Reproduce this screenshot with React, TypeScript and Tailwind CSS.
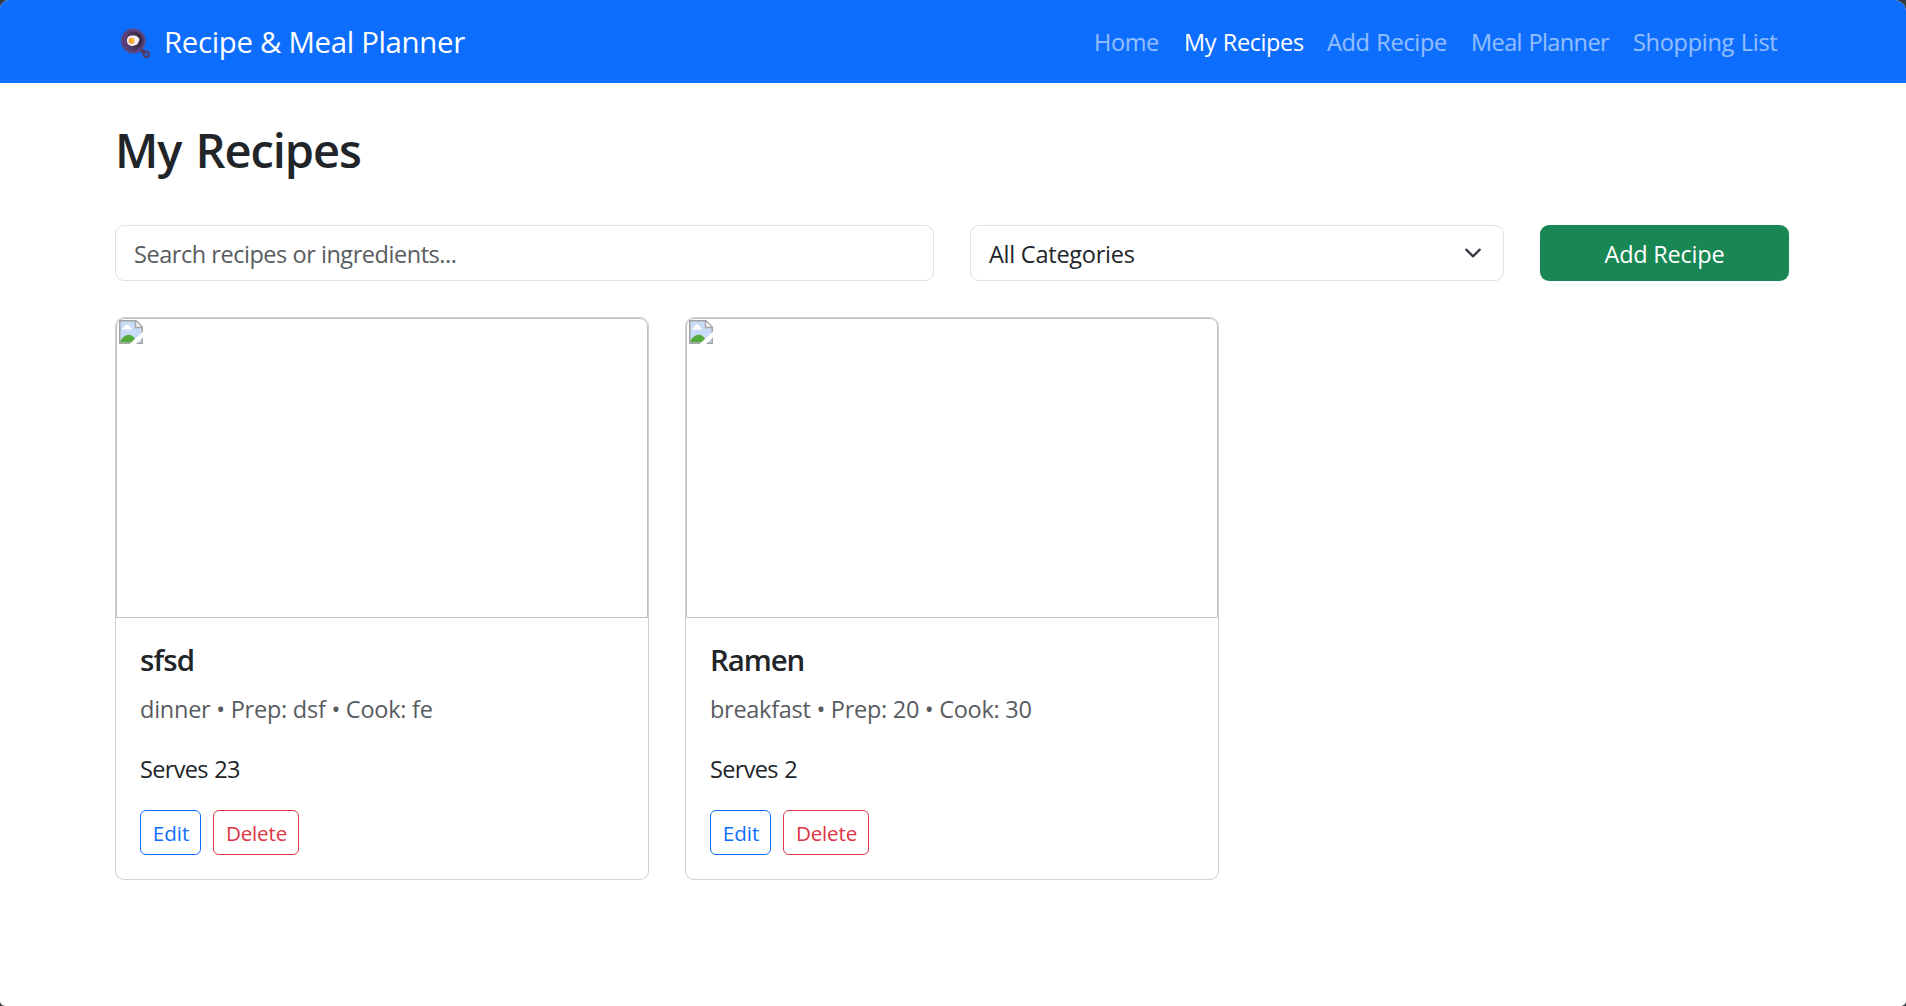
type NavItem = { label: string; active?: boolean; tracking: string };

const NAV_ITEMS: NavItem[] = [
  { label: "Home", tracking: "w-[66px] tracking-[-0.4px]" },
  { label: "My Recipes", active: true, tracking: "w-[119px] tracking-[-0.4px] [word-spacing:1px]" },
  { label: "Add Recipe", tracking: "w-[120px] tracking-[-0.34px] [word-spacing:1px]" },
  { label: "Meal Planner", tracking: "w-[138px] tracking-[-0.6px] [word-spacing:1px]" },
  { label: "Shopping List", tracking: "w-[144px] tracking-[-0.29px] [word-spacing:1px]" },
];

type Recipe = {
  title: string;
  titleTracking: string;
  meta: string;
  metaTracking: string;
  serves: string;
  servesTracking: string;
};

const RECIPES: Recipe[] = [
  {
    title: "sfsd",
    titleTracking: "tracking-[-0.83px]",
    meta: "dinner • Prep: dsf • Cook: fe",
    metaTracking: "tracking-[-0.25px]",
    serves: "Serves 23",
    servesTracking: "tracking-[-0.68px] [word-spacing:1px]",
  },
  {
    title: "Ramen",
    titleTracking: "tracking-[-1.05px]",
    meta: "breakfast • Prep: 20 • Cook: 30",
    metaTracking: "tracking-[-0.28px]",
    serves: "Serves 2",
    servesTracking: "tracking-[-0.65px] [word-spacing:1px]",
  },
];

function PanIcon() {
  return (
    <svg className="mt-0.5 h-[31px] w-[31px] shrink-0" viewBox="0 0 31 31" fill="none">
      <defs>
        <linearGradient id="panInner" x1="5" y1="14" x2="23" y2="12" gradientUnits="userSpaceOnUse">
          <stop stopColor="#5a4276" />
          <stop offset="0.6" stopColor="#40304f" />
          <stop offset="1" stopColor="#33283e" />
        </linearGradient>
        <radialGradient id="yolk" cx="0.65" cy="0.35" r="0.7">
          <stop stopColor="#ffc93c" />
          <stop offset="1" stopColor="#f08c1e" />
        </radialGradient>
      </defs>
      <path d="M21 21.5L25 25.5" stroke="#4d3b66" strokeWidth="4" />
      <circle cx="26.2" cy="26.2" r="2.6" stroke="#523b66" strokeWidth="2.2" />
      <circle cx="13.2" cy="13" r="12.4" fill="#57407a" />
      <circle cx="13.2" cy="13" r="11.7" stroke="#66508a" strokeWidth="0.8" />
      <circle cx="13.7" cy="12.6" r="9" fill="url(#panInner)" />
      <path
        d="M9 8.2C11 6.9 12.3 7.6 14 7.6C16.6 7.4 17.3 8.7 18.7 10C20.1 11.4 19.1 12.4 18.6 13.7C18 15.6 17.3 16.7 15 17.2C12.5 18.5 9.6 18 8 16C6.6 14.2 6.4 10.2 9 8.2Z"
        fill="#f7edf7"
      />
      <circle cx="11.6" cy="12.8" r="3" fill="url(#yolk)" />
    </svg>
  );
}

function BrokenImageIcon() {
  return (
    <svg className="h-6 w-6" viewBox="0 0 24 24" fill="none">
      <path d="M0.75 0.75H17L23.25 7V23.25H0.75Z" fill="#c9dbf8" />
      <path d="M3 9.4C3 7.8 4.4 7.6 5 7.6C5.2 5.6 6.6 4.6 8 4.6C9.6 4.6 10.6 5.8 10.8 7.2C12.4 7.2 12.8 8.4 12.8 9.4Z" fill="#fff" />
      <path d="M1.5 22.5V20.5C4 17 6.5 14.8 9.5 14.8C13 14.8 15.5 17 18 22.5Z" fill="#52ab3a" />
      <path d="M0.75 23.25V0.75H17L23.25 7V23.25Z" stroke="#a3a3a3" strokeWidth="1.5" />
      <path d="M16.5 1V7.5H23" fill="#f4f4f4" stroke="#a3a3a3" strokeWidth="1.4" />
      <path d="M24 11.5L10.5 24H17L24 17.5Z" fill="#fff" />
    </svg>
  );
}

function Chevron() {
  return (
    <svg className="h-[18px] w-[18px]" viewBox="0 0 16 16" fill="none">
      <path d="M2 5l6 6 6-6" stroke="#343a40" strokeWidth="2" strokeLinecap="round" strokeLinejoin="round" />
    </svg>
  );
}

function RecipeCard({ recipe }: { recipe: Recipe }) {
  return (
    <article className="overflow-hidden rounded-[9px] border border-black/[0.175] bg-white">
      <div className="h-[300px] rounded-t-lg border border-[#c0c0c0] pt-px pl-0.5">
        <BrokenImageIcon />
      </div>
      <div className="p-6">
        <h5 className={`text-[29.4px] leading-9 font-semibold ${recipe.titleTracking}`}>{recipe.title}</h5>
        <p className={`mt-[13px] text-[23.5px] leading-9 text-[#595c5f] ${recipe.metaTracking}`}>{recipe.meta}</p>
        <p className={`mt-6 text-[23.5px] leading-9 ${recipe.servesTracking}`}>{recipe.serves}</p>
        <div className="mt-[23px] flex gap-3 text-[20.6px]">
          <button className="h-[45px] w-[61px] rounded-md border border-[#0d6efd] pt-px pl-px text-[#0d6efd]">Edit</button>
          <button className="h-[45px] w-[86px] rounded-md border border-[#dc3545] pt-px pl-px tracking-[-0.19px] text-[#dc3545]">
            Delete
          </button>
        </div>
      </div>
    </article>
  );
}

export default function App() {
  return (
    <div className="h-[1006px] bg-[#333a40] font-['Open_Sans',sans-serif] text-[#212529]">
      <div className="h-full overflow-hidden rounded-tl-[9px] rounded-tr-[12px] rounded-b-[5px] bg-white">
        <nav className="h-[83px] bg-[#0d6efd]">
          <div className="ml-[115px] flex h-full w-[1674px] items-center justify-between">
            <a className="flex items-center pt-0.5 pl-[5px] text-[29.4px] leading-[45px] tracking-[-0.32px] text-white">
              <PanIcon />
              <span className="ml-[13px]">Recipe &amp; Meal Planner</span>
            </a>
            <div className="flex gap-6 pt-px pr-3 text-[23.5px] leading-9">
              {NAV_ITEMS.map((item) => (
                <a
                  key={item.label}
                  className={`whitespace-nowrap ${item.tracking} ${item.active ? "text-white" : "text-white/55"}`}
                >
                  {item.label}
                </a>
              ))}
            </div>
          </div>
        </nav>
        <main className="ml-[115px] w-[1674px] pt-[38px]">
          <h1 className="text-[47px] leading-[58px] font-semibold tracking-[-1.05px] [word-spacing:3px]">My Recipes</h1>
          <div className="mt-[46px] flex h-14 gap-9 text-[23.5px]">
            <input
              className="w-[819px] rounded-[9px] border border-[#dee2e6] pt-1 pl-[18px] tracking-[-0.46px] outline-none placeholder:text-[#595c5f]"
              placeholder="Search recipes or ingredients..."
            />
            <button className="flex w-[534px] items-center justify-between rounded-[9px] border border-[#dee2e6] pr-[21px] pl-[18px] tracking-[-0.24px]">
              <span className="pt-1">All Categories</span>
              <Chevron />
            </button>
            <button className="w-[249px] rounded-[9px] bg-[#198754] pt-1 tracking-[-0.24px] text-white">Add Recipe</button>
          </div>
          <div className="mt-9 grid grid-cols-[534px_534px] gap-9">
            {RECIPES.map((recipe) => (
              <RecipeCard key={recipe.title} recipe={recipe} />
            ))}
          </div>
        </main>
      </div>
    </div>
  );
}
